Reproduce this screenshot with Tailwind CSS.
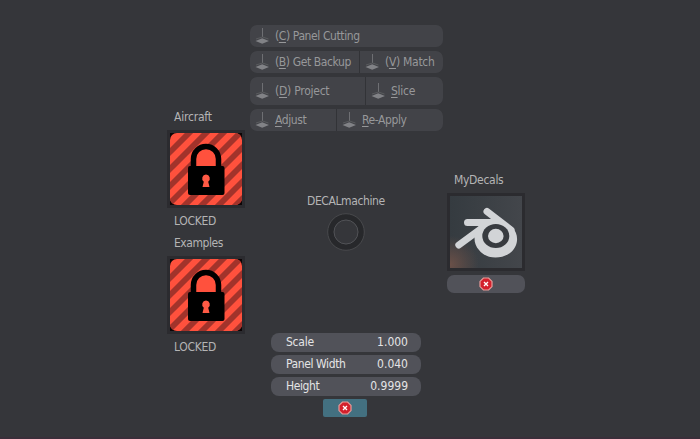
<!DOCTYPE html>
<html lang="en"><head><meta charset="utf-8"><title>DECALmachine</title>
<script src="https://cdn.jsdelivr.net/npm/@tailwindcss/browser@4"></script></head>
<body class="w-[700px] h-[439px] overflow-hidden bg-[#35363a] border-b-2 border-[#3a2f3a] font-['DejaVu_Sans_Condensed','DejaVu_Sans',sans-serif] text-[12px] leading-[14px] text-[#b4b4b5] tracking-[-0.4px]">
<svg class="absolute size-0" xmlns="http://www.w3.org/2000/svg">
<symbol id="decal" viewBox="0 0 14 18"><path d="M7.500 1V10" stroke="#6e6f73" stroke-width="1"/><path d="M1 12L7.500 10L13.500 12" fill="none" stroke="#5c5d61" stroke-width=".9"/><path d="M7.200 11.300L14 14L7.200 16.700L.5 14Z" fill="#818286"/></symbol>
<clipPath id="tile"><rect width="72" height="72" rx="7"/></clipPath>
<symbol id="lock" viewBox="0 0 72 72">
<rect width="72" height="72" fill="#0c0506"/>
<g clip-path="url(#tile)"><rect width="72" height="72" fill="#ff513d"/><path d="M-10 29L29 -10M-10 46L46 -10M-10 63L63 -10M-10 80L80 -10M6 81L81 6M23 81L81 23M40 81L81 40M57 81L81 57" stroke="#a2332b" stroke-width="5.800"/></g>
<path d="M23.500 37V26a12.500 12.500 0 0 1 25 0V37Z" fill="#ff513d" stroke="#000" stroke-width="5.500"/>
<rect x="18" y="33" width="36.500" height="29" rx="2" fill="#000"/>
<path d="M36 41.500a4 4 0 0 1 2.200 7.200L39.500 54h-7l1.300-5.300A4 4 0 0 1 36 41.500Z" fill="#ff5a45"/></symbol>
<symbol id="cancel" viewBox="0 0 14 14"><path d="M4.400 1h5.200L13 4.400v5.200L9.600 13H4.400L1 9.600V4.400Z" fill="#d3202c" stroke="#e99b98" stroke-width="1.200"/><path d="M5 5l4 4M9 5L5 9" stroke="#fff" stroke-width="1.300"/></symbol>
</svg>
<main class="flex h-full">
<section class="w-[250px] pl-[167px] pt-[110px]">
<h2 class="h-5 pl-[7px] tracking-[-0.2px]">Aircraft</h2>
<div class="size-[78px] bg-[#2b2b2f] p-[3px]"><svg class="size-[72px]"><use href="#lock"/></svg></div>
<p class="mt-[6px] h-[22px] pl-[7px] tracking-[-0.3px]">LOCKED</p>
<h2 class="h-5 pl-[7px] tracking-[-0.45px]">Examples</h2>
<div class="size-[78px] bg-[#2b2b2f] p-[3px]"><svg class="size-[72px]"><use href="#lock"/></svg></div>
<p class="mt-[6px] pl-[7px] tracking-[-0.3px]">LOCKED</p>
</section>
<section class="w-[193px] pt-[25px]">
<div class="flex flex-col gap-1 text-[#97989a] whitespace-nowrap [&_u]:underline-offset-2">
<div class="flex h-[22px] rounded-[7px] overflow-hidden bg-[#424348]"><div class="flex flex-1 items-center pl-[5px] gap-[6px]"><svg class="w-[14px] h-[18px]"><use href="#decal"/></svg><span>(<u>C</u>) Panel Cutting</span></div></div>
<div class="flex gap-px h-[22px] rounded-[7px] overflow-hidden bg-[#323337]"><div class="w-[109px] flex items-center pl-[5px] gap-[6px] bg-[#424348]"><svg class="w-[14px] h-[18px]"><use href="#decal"/></svg><span>(<u>B</u>) Get Backup</span></div><div class="flex flex-1 items-center pl-[5px] gap-[6px] bg-[#424348]"><svg class="w-[14px] h-[18px]"><use href="#decal"/></svg><span class="tracking-[-0.3px]">(<u>V</u>) Match</span></div></div>
<div class="flex gap-px h-[28px] rounded-[7px] overflow-hidden bg-[#323337]"><div class="w-[115px] flex items-center pl-[5px] gap-[6px] bg-[#424348]"><svg class="w-[14px] h-[18px]"><use href="#decal"/></svg><span class="tracking-[-0.25px]">(<u>D</u>) Project</span></div><div class="flex flex-1 items-center pl-[5px] gap-[6px] bg-[#424348]"><svg class="w-[14px] h-[18px]"><use href="#decal"/></svg><span class="tracking-[-0.25px]"><u>S</u>lice</span></div></div>
<div class="flex gap-px h-[22px] rounded-[7px] overflow-hidden bg-[#323337]"><div class="w-[86px] flex items-center pl-[5px] gap-[6px] bg-[#424348]"><svg class="w-[14px] h-[18px]"><use href="#decal"/></svg><span class="tracking-[-0.4px]"><u>A</u>djust</span></div><div class="flex flex-1 items-center pl-[5px] gap-[6px] bg-[#424348]"><svg class="w-[14px] h-[18px]"><use href="#decal"/></svg><span><u>R</u>e-Apply</span></div></div>
</div>
<h1 class="mt-[63px] pl-[57px] h-[18px]">DECALmachine</h1>
<svg class="mt-px ml-[77px] size-[38px]" viewBox="0 0 38 38"><circle cx="19" cy="19" r="15.200" fill="none" stroke="#27282b" stroke-width="6"/><circle cx="19" cy="19" r="18.300" fill="none" stroke="#48494c"/><circle cx="19" cy="19" r="12" fill="none" stroke="#515256"/></svg>
<div class="mt-[81.500px] ml-[21px] w-[150px] flex flex-col gap-[3px] text-[#e4e4e5]">
<div class="flex h-[19px] justify-between items-center rounded-[8px] bg-[#515259] pl-[15px] pr-[13px]"><span class="tracking-[-0.25px]">Scale</span><span class="tracking-normal">1.000</span></div>
<div class="flex h-[19px] justify-between items-center rounded-[8px] bg-[#515259] pl-[15px] pr-[13px]"><span>Panel Width</span><span class="tracking-normal">0.040</span></div>
<div class="flex h-[19px] justify-between items-center rounded-[8px] bg-[#515259] pl-[15px] pr-[13px]"><span>Height</span><span class="tracking-normal">0.9999</span></div>
</div>
<div class="mt-[3.500px] ml-[73px] w-[44px] h-[18px] rounded-[2px] bg-[#437080] flex items-center justify-center"><svg class="size-[14px]"><use href="#cancel"/></svg></div>
</section>
<section class="pl-1 pt-[173px]">
<h2 class="h-5 pl-[7px] tracking-[-0.3px]">MyDecals</h2>
<div class="size-[78px] bg-[#2b2b2f] p-[3px]"><svg class="size-[72px]" viewBox="0 0 72 72"><defs><linearGradient id="sky" x1="0" y1="0" x2="1" y2="0"><stop offset="0" stop-color="#353b40"/><stop offset="1" stop-color="#43464b"/></linearGradient><radialGradient id="glow" cx="0" cy=".95" r=".4"><stop offset="0" stop-color="#6a5048"/><stop offset="1" stop-color="#6a5048" stop-opacity="0"/></radialGradient></defs><rect width="72" height="72" fill="url(#sky)"/><rect width="72" height="72" fill="url(#glow)"/>
<path d="M37 15.500L61 34M17.500 26.500H42M8.800 49L36 29" fill="none" stroke="#d2d4d7" stroke-width="7" stroke-linecap="round"/><path d="M33 23H47L62 31C70 39 68 51 60 57C50 64 36 63 29 54C24.500 49 23.500 43 25.500 36Z" fill="#d2d4d7"/><ellipse cx="45.800" cy="40" rx="13.500" ry="12" fill="#383b40"/><ellipse cx="45.800" cy="40" rx="7.800" ry="7.200" fill="#d2d4d7"/></svg></div>
<div class="mt-1 h-[18px] w-[78px] rounded-[7px] bg-[#515259] flex items-center justify-center"><svg class="size-[14px]"><use href="#cancel"/></svg></div>
</section>
</main>
</body></html>
